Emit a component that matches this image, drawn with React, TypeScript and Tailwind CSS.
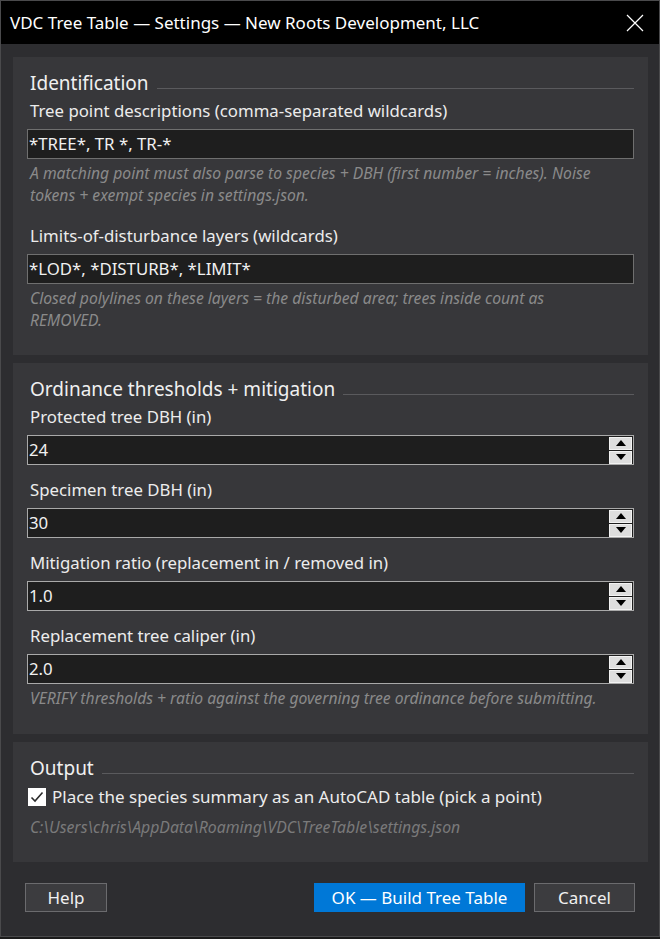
import React from "react";

const F = "font-['Noto_Sans','Open_Sans',sans-serif]";

function SectionHeading({ title }: { title: string }) {
  return (
    <div className="flex items-center h-[26px] pl-[3px]">
      <span className="text-[19px] leading-[26px] text-[#f0f0f0] whitespace-nowrap">{title}</span>
      <div className="flex-1 h-px bg-[#5a5a5d] ml-[8px] mt-[10px]" />
    </div>
  );
}

function Label({ children, className = "" }: { children: React.ReactNode; className?: string }) {
  return (
    <div className={"h-[24px] leading-[24px] text-[16.8px] text-[#ececec] pl-[3px] whitespace-nowrap " + className}>
      {children}
    </div>
  );
}

function Help({ children, className = "" }: { children: React.ReactNode; className?: string }) {
  return (
    <div className={"text-[15.7px] leading-[22px] italic text-[#8a8a8a] pl-[3px] " + className}>{children}</div>
  );
}

function TextInput({ value, className = "" }: { value: string; className?: string }) {
  return (
    <div
      className={
        "h-[30px] bg-[#1e1e1e] border border-[#6f6f6f] flex items-center pl-[1px] text-[16.8px] text-[#f0f0f0] whitespace-nowrap " +
        className
      }
    >
      {value}
    </div>
  );
}

function Spin({ value, className = "" }: { value: string; className?: string }) {
  return (
    <div
      className={
        "h-[30px] bg-[#1e1e1e] border border-[#a9a9a9] flex items-center justify-between pl-[1px] text-[16.8px] text-[#f0f0f0] " +
        className
      }
    >
      <span>{value}</span>
      <div className="flex flex-col gap-px mr-px">
        <div className="w-[23px] h-[13px] bg-[#dddddd] border border-[#f2f2f2] flex items-center justify-center">
          <svg width="10" height="6" viewBox="0 0 10 6">
            <polygon points="5,0 10,6 0,6" fill="#000" />
          </svg>
        </div>
        <div className="w-[23px] h-[13px] bg-[#dddddd] border border-[#f2f2f2] flex items-center justify-center">
          <svg width="10" height="6" viewBox="0 0 10 6">
            <polygon points="0,0 10,0 5,6" fill="#000" />
          </svg>
        </div>
      </div>
    </div>
  );
}

export default function App() {
  return (
    <div className={"w-[660px] h-[939px] bg-[#1b1b1b] " + F}>
      <div className="w-[660px] h-[937px] border border-[#4a4a4c] bg-[#2d2d30] flex flex-col">
        {/* Title bar */}
        <div className="h-[43px] bg-black flex items-center justify-between pl-[9px] pr-[15px] shrink-0">
          <span className="text-[17px] text-white whitespace-nowrap">
            VDC Tree Table — Settings — New Roots Development, LLC
          </span>
          <svg width="18" height="18" viewBox="0 0 18 18">
            <path d="M1 1 L17 17 M17 1 L1 17" stroke="#ffffff" strokeWidth="1.2" />
          </svg>
        </div>

        <div className="flex flex-col pl-[12px] pr-[11px] pt-[13px]">
          {/* Identification */}
          <div className="bg-[#37373a] px-[14px] pt-[13px] pb-[24px] h-[298px]">
            <SectionHeading title="Identification" />
            <Label className="mt-[3px]">Tree point descriptions (comma-separated wildcards)</Label>
            <TextInput value="*TREE*, TR *, TR-*" className="mt-[6px]" />
            <Help className="mt-[3px]">
              A matching point must also parse to species + DBH (first number = inches). Noise tokens + exempt
              species in settings.json.
            </Help>
            <Label className="mt-[18px]">Limits-of-disturbance layers (wildcards)</Label>
            <TextInput value="*LOD*, *DISTURB*, *LIMIT*" className="mt-[6px]" />
            <Help className="mt-[3px] pr-[50px]">
              Closed polylines on these layers = the disturbed area; trees inside count as REMOVED.
            </Help>
          </div>

          {/* Ordinance */}
          <div className="bg-[#37373a] px-[14px] pt-[13px] mt-[8px] h-[371px]">
            <SectionHeading title="Ordinance thresholds + mitigation" />
            <Label className="mt-[3px]">Protected tree DBH (in)</Label>
            <Spin value="24" className="mt-[6px]" />
            <Label className="mt-[13px]">Specimen tree DBH (in)</Label>
            <Spin value="30" className="mt-[6px]" />
            <Label className="mt-[13px]">Mitigation ratio (replacement in / removed in)</Label>
            <Spin value="1.0" className="mt-[6px]" />
            <Label className="mt-[13px]">Replacement tree caliper (in)</Label>
            <Spin value="2.0" className="mt-[6px]" />
            <Help className="mt-[3px] whitespace-nowrap">
              VERIFY thresholds + ratio against the governing tree ordinance before submitting.
            </Help>
          </div>

          {/* Output */}
          <div className="bg-[#37373a] px-[14px] pt-[13px] mt-[8px] h-[120px]">
            <SectionHeading title="Output" />
            <div className="flex items-center h-[22px] mt-[5px] pl-[1px]">
              <div className="w-[18px] h-[18px] bg-white flex items-center justify-center shrink-0">
                <svg width="14" height="14" viewBox="0 0 14 14">
                  <path d="M1.5 7.5 L5 11 L12.5 2.5" stroke="#2b2b2b" strokeWidth="1.6" fill="none" />
                </svg>
              </div>
              <span className="ml-[6px] text-[17px] text-[#ececec] whitespace-nowrap">
                Place the species summary as an AutoCAD table (pick a point)
              </span>
            </div>
            <div className="mt-[9px] pl-[3px] h-[20px] leading-[20px] text-[15.8px] italic text-[#7a7a7a] whitespace-nowrap">
              C:\Users\chris\AppData\Roaming\VDC\TreeTable\settings.json
            </div>
          </div>

          {/* Buttons */}
          <div className="flex items-center mt-[21px] pl-[12px] pr-[13px]">
            <button className="w-[82px] h-[29px] bg-[#3c3c3f] border border-[#6b6b6e] text-[17px] text-[#f0f0f0]">
              Help
            </button>
            <div className="flex-1" />
            <button className="w-[211px] h-[29px] bg-[#0078d7] text-[17px] text-white">OK — Build Tree Table</button>
            <button className="w-[101px] h-[29px] ml-[9px] bg-[#3c3c3f] border border-[#6b6b6e] text-[17px] text-[#f0f0f0]">
              Cancel
            </button>
          </div>
        </div>
      </div>
    </div>
  );
}
